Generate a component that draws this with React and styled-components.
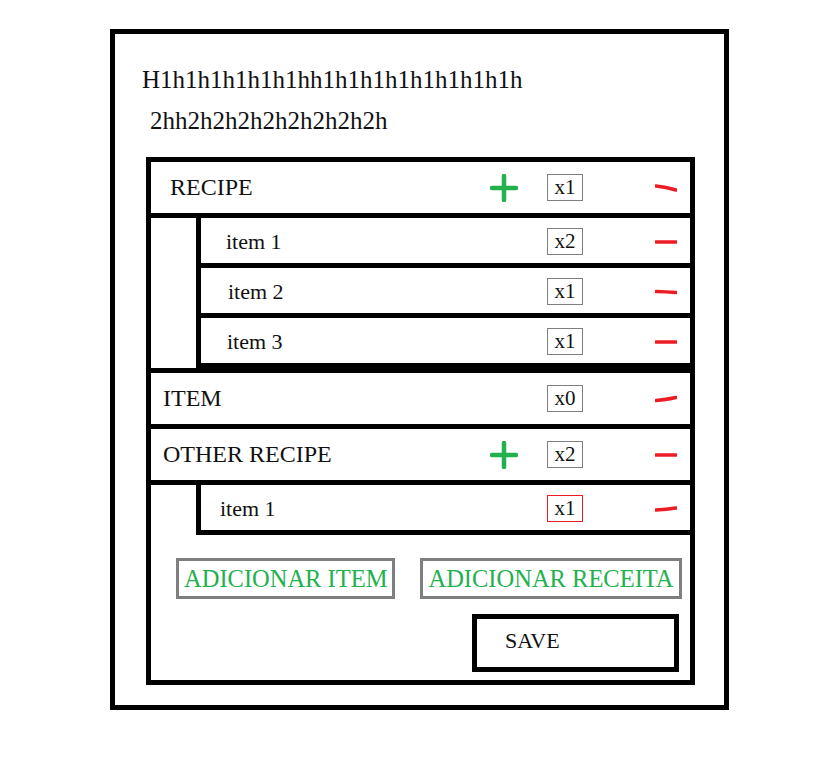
import React from 'react'
import styled, { createGlobalStyle } from 'styled-components'

const GlobalStyle = createGlobalStyle`
  body {
    margin: 0;
    background: #fff;
    color: #111;
    font-family: 'Liberation Serif', 'Times New Roman', serif;
  }
`

const Frame = styled.div`
  box-sizing: border-box;
  width: 619px;
  margin: 29px 0 0 110px;
  padding: 32px 0 20px 0;
  border: 5px solid #000;
`

const Title = styled.h1`
  margin: 0 0 0 27px;
  font-weight: normal;
  font-size: 25px;
  line-height: 28px;
`

const Subtitle = styled.h2`
  margin: 13px 0 0 35px;
  font-weight: normal;
  font-size: 25px;
  line-height: 28px;
`

const Panel = styled.div`
  box-sizing: border-box;
  width: 549px;
  margin: 22px 0 0 31px;
  padding-bottom: 8px;
  border: 5px solid #000;
`

const HeaderRow = styled.div`
  box-sizing: border-box;
  display: flex;
  align-items: center;
  height: ${(p) => (p.$top ? 61 : 56)}px;
  padding: 0 13px 0 ${(p) => p.$indent}px;
  border-top: ${(p) => (p.$top ? '5px solid #000' : 'none')};
  border-bottom: 5px solid #000;
  font-size: 24px;
`

const ChildGroup = styled.div`
  padding-left: 45px;
`

const ChildRow = styled.div`
  box-sizing: border-box;
  display: flex;
  align-items: center;
  height: 50px;
  padding: 2px 13px 0 ${(p) => p.$indent}px;
  border-left: 5px solid #000;
  border-bottom: 5px solid #000;
  font-size: 22px;
`

const Name = styled.span`
  flex: 1;
`

const PlusSlot = styled.div`
  display: flex;
  width: 28px;
  height: 28px;
  margin-right: 29px;
`

const Qty = styled.div`
  box-sizing: border-box;
  display: flex;
  align-items: center;
  justify-content: center;
  width: 36px;
  height: 27px;
  border: 1px solid ${(p) => (p.$alert ? '#ed1c24' : '#7f7f7f')};
  font-size: 21px;
  line-height: 1;
`

const MinusSlot = styled.div`
  display: flex;
  width: 22px;
  height: 10px;
  margin-left: 72px;
`

const Actions = styled.div`
  display: flex;
  gap: 25px;
  margin: 23px 0 0 25px;
`

const AddButton = styled.button`
  box-sizing: border-box;
  height: 41px;
  padding: 0 5px;
  border: 3px solid #7f7f7f;
  background: #fff;
  color: #22b14c;
  font-family: 'Liberation Serif', 'Times New Roman', serif;
  font-size: 24.5px;
`

const SaveRow = styled.div`
  display: flex;
  justify-content: flex-end;
  margin: 15px 11px 0 0;
`

const SaveButton = styled.button`
  box-sizing: border-box;
  width: 207px;
  height: 58px;
  padding: 0 0 4px 28px;
  border: 5px solid #000;
  background: #fff;
  color: #111;
  text-align: left;
  font-family: 'Liberation Serif', 'Times New Roman', serif;
  font-size: 22px;
`

const Plus = () => (
  <svg width="28" height="28" viewBox="0 0 28 28">
    <path
      d="M14 2 V26 M2 14 H26"
      stroke="#22b14c"
      strokeWidth="4.5"
      strokeLinecap="round"
      fill="none"
    />
  </svg>
)

const Minus = ({ slope = 0 }) => (
  <svg width="22" height="10" viewBox="0 0 22 10">
    <path
      d={`M1 ${5 - slope} Q11 ${5 - slope / 2} 21 ${5 + slope}`}
      stroke="#ed1c24"
      strokeWidth="3.5"
      strokeLinecap="round"
      fill="none"
    />
  </svg>
)

const Controls = ({ plus, qty, alert, slope }) => (
  <>
    <PlusSlot>{plus && <Plus />}</PlusSlot>
    <Qty $alert={alert}>{qty}</Qty>
    <MinusSlot>
      <Minus slope={slope} />
    </MinusSlot>
  </>
)

export default function App() {
  return (
    <>
      <GlobalStyle />
      <Frame>
        <Title>H1h1h1h1h1h1hh1h1h1h1h1h1h1h1h</Title>
        <Subtitle>2hh2h2h2h2h2h2h2h2h</Subtitle>
        <Panel>
          <HeaderRow $indent={19}>
            <Name>RECIPE</Name>
            <Controls plus qty="x1" slope={2} />
          </HeaderRow>
          <ChildGroup>
            <ChildRow $indent={25}>
              <Name>item 1</Name>
              <Controls qty="x2" />
            </ChildRow>
            <ChildRow $indent={27}>
              <Name>item 2</Name>
              <Controls qty="x1" slope={0.5} />
            </ChildRow>
            <ChildRow $indent={26}>
              <Name>item 3</Name>
              <Controls qty="x1" />
            </ChildRow>
          </ChildGroup>
          <HeaderRow $indent={12} $top>
            <Name>ITEM</Name>
            <Controls qty="x0" slope={-1.5} />
          </HeaderRow>
          <HeaderRow $indent={12}>
            <Name>OTHER RECIPE</Name>
            <Controls plus qty="x2" />
          </HeaderRow>
          <ChildGroup>
            <ChildRow $indent={19}>
              <Name>item 1</Name>
              <Controls qty="x1" alert slope={-1} />
            </ChildRow>
          </ChildGroup>
          <Actions>
            <AddButton>ADICIONAR ITEM</AddButton>
            <AddButton>ADICIONAR RECEITA</AddButton>
          </Actions>
          <SaveRow>
            <SaveButton>SAVE</SaveButton>
          </SaveRow>
        </Panel>
      </Frame>
    </>
  )
}
